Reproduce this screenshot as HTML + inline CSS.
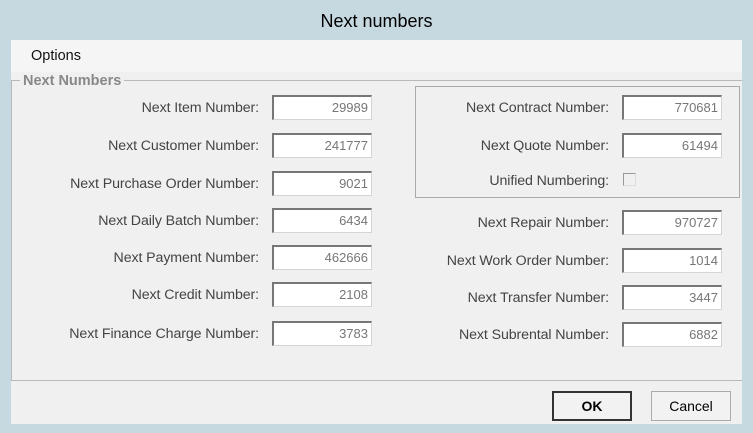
<!DOCTYPE html>
<html><head><style>
body{margin:0;width:753px;height:433px;background:#c6d9e1;font-family:"Liberation Sans",sans-serif;position:relative;overflow:hidden}
.t{position:absolute;left:0;top:11px;width:753px;text-align:center;font-size:18px;color:#000}
.client{position:absolute;left:11px;top:40px;width:731px;height:384px;background:#f0f0f0}
.menu{position:absolute;left:11px;top:40px;width:731px;height:32px;background:#f5f5f5}
.menu span{position:absolute;left:20px;top:8px;font-size:14.5px;color:#111}
.a{position:absolute}
.lbl{position:absolute;font-size:14.2px;color:#444;text-align:right;width:320px;letter-spacing:-0.1px}
.in{position:absolute;background:#ffffff;border:1px solid #d4d4d4;border-top:2px solid #777;border-left:2px solid #777;font-size:13px;color:#777;text-align:right;box-sizing:border-box;padding:3px 3px 0 0;width:100px;height:25px}
.btn{position:absolute;top:391px;width:80px;height:30px;box-sizing:border-box;background:#f2f2f2;border:1px solid #aaa;font-size:14px;text-align:center;line-height:28px}
</style></head><body>
<div class="t">Next numbers</div>
<div class="client"></div>
<div class="menu"><span>Options</span></div>
<div class="a" style="left:11px;top:80px;width:731px;height:1px;background:#b8b8b8"></div>
<div class="a" style="left:11px;top:80px;width:1px;height:301px;background:#b8b8b8"></div>
<div class="a" style="left:11px;top:380px;width:731px;height:1px;background:#b8b8b8"></div>
<div class="a" style="left:20px;top:73px;padding:0 3px;background:#f0f0f0;font-size:14.5px;font-weight:bold;color:#888">Next Numbers</div>
<div class="a" style="left:415px;top:86px;width:323px;height:110px;border:1px solid #aaa"></div>

<div class="lbl" style="left:-61px;top:100px">Next Item Number:</div><div class="in" style="left:272px;top:95px">29989</div>
<div class="lbl" style="left:-61px;top:138px">Next Customer Number:</div><div class="in" style="left:272px;top:133px">241777</div>
<div class="lbl" style="left:-61px;top:176px">Next Purchase Order Number:</div><div class="in" style="left:272px;top:171px">9021</div>
<div class="lbl" style="left:-61px;top:213px">Next Daily Batch Number:</div><div class="in" style="left:272px;top:208px">6434</div>
<div class="lbl" style="left:-61px;top:250px">Next Payment Number:</div><div class="in" style="left:272px;top:245px">462666</div>
<div class="lbl" style="left:-61px;top:287px">Next Credit Number:</div><div class="in" style="left:272px;top:282px">2108</div>
<div class="lbl" style="left:-61px;top:326px">Next Finance Charge Number:</div><div class="in" style="left:272px;top:321px">3783</div>

<div class="lbl" style="left:289px;top:100px">Next Contract Number:</div><div class="in" style="left:622px;top:95px">770681</div>
<div class="lbl" style="left:289px;top:138px">Next Quote Number:</div><div class="in" style="left:622px;top:133px">61494</div>
<div class="lbl" style="left:289px;top:173px">Unified Numbering:</div>
<div class="a" style="left:623px;top:173px;width:13px;height:13px;box-sizing:border-box;border:1px solid #999;border-right-color:#ddd;border-bottom-color:#ddd;background:#f0f0f0"></div>
<div class="lbl" style="left:289px;top:215px">Next Repair Number:</div><div class="in" style="left:622px;top:210px">970727</div>
<div class="lbl" style="left:289px;top:253px">Next Work Order Number:</div><div class="in" style="left:622px;top:248px">1014</div>
<div class="lbl" style="left:289px;top:290px">Next Transfer Number:</div><div class="in" style="left:622px;top:285px">3447</div>
<div class="lbl" style="left:289px;top:327px">Next Subrental Number:</div><div class="in" style="left:622px;top:322px">6882</div>

<div class="btn" style="left:552px;border:2px solid #333;line-height:26px;font-weight:bold">OK</div>
<div class="btn" style="left:651px">Cancel</div>
</body></html>
